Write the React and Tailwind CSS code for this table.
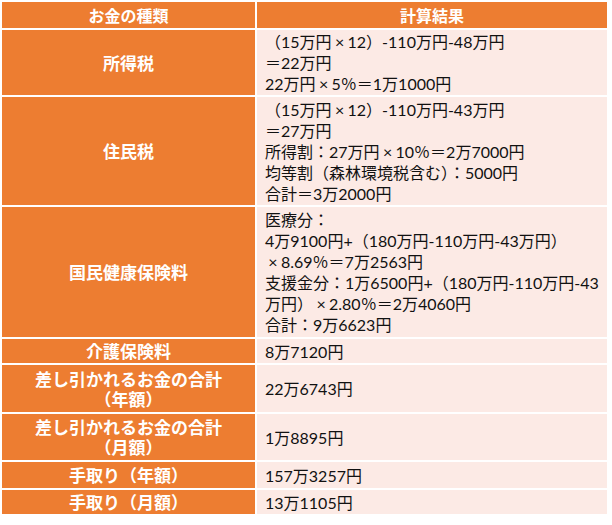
import React from "react";

const rows = [
  {
    label: ["所得税"],
    h: "h-[65px]",
    lines: ["（15万円×12）-110万円-48万円", "＝22万円", "22万円×5％＝1万1000円"],
  },
  {
    label: ["住民税"],
    h: "h-[108px]",
    lines: [
      "（15万円×12）-110万円-43万円",
      "＝27万円",
      "所得割：27万円×10％＝2万7000円",
      "均等割（森林環境税含む）：5000円",
      "合計＝3万2000円",
    ],
  },
  {
    label: ["国民健康保険料"],
    h: "h-[130px]",
    lines: [
      "医療分：",
      "4万9100円+（180万円-110万円-43万円）",
      "×8.69％＝7万2563円",
      "支援金分：1万6500円+（180万円-110万円-43",
      "万円）×2.80％＝2万4060円",
      "合計：9万6623円",
    ],
  },
  { label: ["介護保険料"], h: "h-[24px]", lines: ["8万7120円"] },
  { label: ["差し引かれるお金の合計", "（年額）"], h: "h-[47px]", lines: ["22万6743円"] },
  { label: ["差し引かれるお金の合計", "（月額）"], h: "h-[46px]", lines: ["1万8895円"] },
  { label: ["手取り（年額）"], h: "h-[26px]", lines: ["157万3257円"] },
  { label: ["手取り（月額）"], h: "h-[24px]", lines: ["13万1105円"] },
];

function Line({ text }) {
  const parts = text.split("×");
  return (
    <div className="whitespace-nowrap">
      {parts.map((p, i) => (
        <React.Fragment key={i}>
          {i > 0 && <span className="inline-block w-[16px] text-center">×</span>}
          {p}
        </React.Fragment>
      ))}
    </div>
  );
}

export default function App() {
  return (
    <div className="w-[612px] h-[525px] bg-white pt-[2px] pl-[2px]">
      <div className="flex flex-col gap-[2px] w-[605px]">
        <div className="flex gap-[2px] h-[26px]">
          <div className="w-[253px] bg-[#ED7D31] flex items-center justify-center text-white font-bold text-[16px] font-['Noto_Sans_CJK_JP',sans-serif]">
            お金の種類
          </div>
          <div className="flex-1 bg-[#ED7D31] flex items-center justify-center text-white font-bold text-[16px] font-['Noto_Sans_CJK_JP',sans-serif]">
            計算結果
          </div>
        </div>
        {rows.map((r, i) => (
          <div key={i} className={`flex gap-[2px] ${r.h}`}>
            <div className="w-[253px] bg-[#ED7D31] flex flex-col items-center justify-center text-white font-bold text-[17px] leading-[20px] font-['Noto_Sans_CJK_JP',sans-serif]">
              {r.label.map((l, j) => (
                <div key={j} className="whitespace-nowrap leading-[20px] h-[20px]">{l}</div>
              ))}
            </div>
            <div className="flex-1 bg-[#FCEAE5] flex flex-col justify-center pl-[8px] text-[#111111] text-[16px] leading-[21px] font-['Lato','Noto_Sans_CJK_JP',sans-serif]">
              {r.lines.map((l, j) => (
                <Line key={j} text={l} />
              ))}
            </div>
          </div>
        ))}
      </div>
    </div>
  );
}
